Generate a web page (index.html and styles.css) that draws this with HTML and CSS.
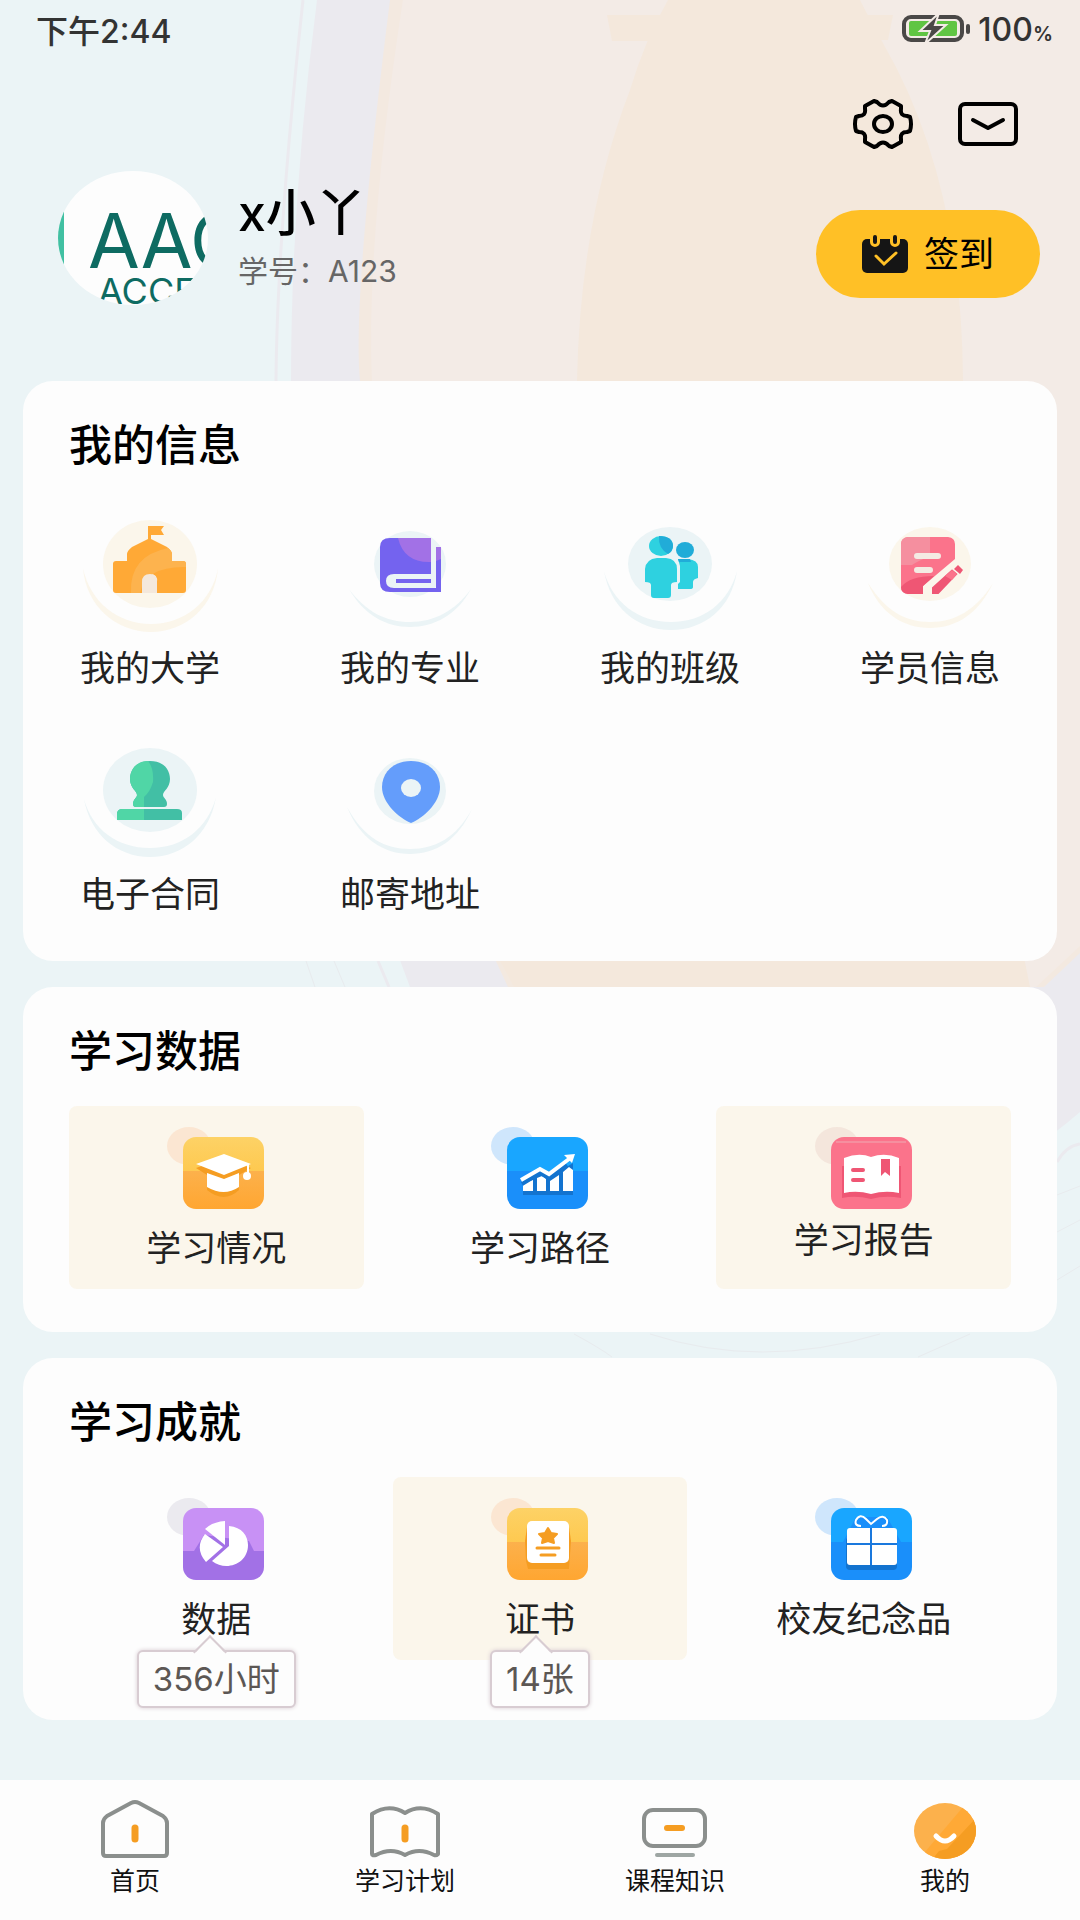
FILE: index.html
```
<!DOCTYPE html>
<html lang="zh-CN">

<head>
    <meta charset="UTF-8">
    <meta name="viewport" content="width=device-width, initial-scale=1.0">
    <title>我的</title>
    <link rel="stylesheet" href="styles.css">
</head>

<body>
    <svg class="page-bg" viewBox="0 0 1080 1920" preserveAspectRatio="none" aria-hidden="true">
        <path fill="#ebeaef" d="M317 0 Q291 200 291 381 Q300 700 410 987 L800 1240 Q980 1200 1080 1112 V0Z" />
        <path fill="#f3e9e0" d="M390 0 Q352 300 360 381 Q380 720 508 987 H1044 L1080 953 V0Z" />
        <path fill="#f3ebe6" d="M403 0 Q366 240 372 381 Q400 720 530 987 H1036 L1080 946 V0Z" />
        <path fill="#f4e8dc" d="M668 0 Q645 40 630 90 Q580 220 577 381 Q540 800 500 961 L514 987 H1030 Q970 700 963 381 Q962 180 884 45 Q870 20 860 0Z" />
        <path fill="#f4e8dc" d="M607 15 H665 V41 H612Z M860 15 H893 L888 40 H870Z" />
        <path fill="none" stroke="#ebeaef" stroke-width="3" d="M303 0 Q277 240 276 381 M378 961 L389 987 M1057 1162 Q1066 1146 1080 1144" />
        <path fill="none" stroke="#e8ebee" d="M306 961 L315 987 M334 961 L345 987 M574 1334 Q600 1348 612 1357 M650 1334 Q760 1370 880 1334 M918 1357 L970 1334 M1057 1195 L1080 1186 M1057 1232 L1080 1220 M1057 1280 L1080 1266" />
    </svg>

    <div class="status-bar">
        <span>下午2:44</span>
        <div class="battery">
            <svg width="70" height="32" viewBox="0 0 70 32">
                <rect x="4" y="4" width="58" height="23" rx="7" fill="#f3ebe6" stroke="#4a4847" stroke-width="4" />
                <rect x="9" y="8" width="48" height="15" rx="2" fill="#60c543" />
                <rect x="66" y="11" width="4" height="10" rx="2" fill="#4a4847" />
                <path fill="#4a4847" stroke="#f3ebe6" stroke-width="2" d="M39 0 L20 18 H30 L25 31 L46 12 H35Z" />
            </svg>
            <span>100<small>%</small></span>
        </div>
    </div>

    <header class="header">
        <div class="actions">
            <button type="button" class="icon-btn" aria-label="设置">
                <svg width="60" height="50" viewBox="0 0 60 50" fill="none" stroke="#000" stroke-width="4" stroke-linejoin="round">
                    <path d="M21 2 L24 3 Q30 10 36 3 L39 2 L48 7 V10 Q47 17 54 17 L57 18 Q59 25 57 32 L54 33 Q47 33 48 40 V43 L39 48 L36 47 Q30 40 24 47 L21 48 L12 43 V40 Q13 33 6 33 L3 32 Q1 25 3 18 L6 17 Q13 17 12 10 V7Z" />
                    <ellipse cx="30" cy="25" rx="9" ry="8" />
                </svg>
            </button>
            <button type="button" class="icon-btn" aria-label="消息">
                <svg width="62" height="50" viewBox="0 0 62 50" fill="none" stroke="#000" stroke-width="4" stroke-linecap="round" stroke-linejoin="round">
                    <rect x="3" y="5" width="56" height="40" rx="5" />
                    <path d="M16 21 L31 29 L46 21" />
                </svg>
            </button>
        </div>
        <div class="profile">
            <svg class="avatar" width="150" height="134" viewBox="0 0 150 134">
                <clipPath id="avatarClip">
                    <ellipse cx="75" cy="67" rx="75" ry="67" />
                </clipPath>
                <g clip-path="url(#avatarClip)">
                    <rect width="150" height="134" fill="#fdfdfd" />
                    <rect width="6" height="134" fill="#41c0a2" />
                    <text class="avatar-big" x="30" y="97">AAC</text>
                    <text class="avatar-small" x="40" y="133">ACCE</text>
                </g>
            </svg>
            <div class="profile-text">
                <h1>x小丫</h1>
                <p>学号：A123</p>
            </div>
            <button type="button" class="checkin-btn">
                <svg width="46" height="40" viewBox="0 0 46 40" aria-hidden="true">
                    <rect x="0" y="5" width="46" height="34" rx="5" fill="#151515" />
                    <path d="M13 0 V8 M33 0 V8" stroke="#ffc026" stroke-width="10" stroke-linecap="round" />
                    <path d="M13 3 V8 M33 3 V8" stroke="#151515" stroke-width="4" stroke-linecap="round" />
                    <path d="M14 22 L22 30 L34 19" fill="none" stroke="#ffc026" stroke-width="3" stroke-linecap="round" />
                </svg>
                签到
            </button>
        </div>
    </header>

    <main class="content">
        <section class="card">
            <h2>我的信息</h2>
            <div class="info-grid">
                <a href="#" class="info-item">
                    <svg width="140" height="116" viewBox="0 0 140 116">
                        <ellipse cx="70" cy="44" rx="47" ry="44" fill="#fbf6eb" />
                        <path fill="#fbf6eb" d="M3 48 C6 86 36 112 71 112 S135 86 138 48 C132 82 104 104 71 104 S10 82 3 48Z" />
                        <path fill="#ffa936" d="M68 6 H84 L81 10 L84 15 H71 V19 L87 27 Q92 31 92 34 V41 H103 Q106 41 106 44 V70 Q106 73 103 73 H77 V62 Q77 54 70 54 T62 62 V73 H36 Q33 73 33 70 V44 Q33 41 36 41 H47 V34 Q47 31 52 27 L68 19Z" />
                        <path fill="#fdb34e" d="M51 73 Q49 36 88 28 Q92 31 92 34 V41 H103 Q106 41 106 44 V47 Q66 46 60 73Z" />
                        <path fill="#f4e8dc" d="M62 73 V62 Q62 54 70 54 T77 62 V73Z" />
                    </svg>
                    <span>我的大学</span>
                </a>
                <a href="#" class="info-item">
                    <svg width="140" height="116" viewBox="0 0 140 116">
                        <ellipse cx="70" cy="44" rx="36" ry="33" fill="#ebf4f6" />
                        <path fill="#ebf4f6" d="M9 69 C24 95 46 107 70 107 S117 95 131 69 C115 91 94 102 70 102 S26 92 9 69Z" />
                        <path fill="#7463ef" d="M50 18 H91 V54 H54 Q46 54 46 61 T54 68 H96 V27 H101 V72 H50 Q40 72 40 63 V27 Q40 18 50 18Z" />
                        <path fill="#a271e6" d="M58 18 H91 V42 Q64 43 58 18Z M96 27 H101 V39 L96 41Z" />
                        <rect x="56" y="59" width="35" height="4" fill="#7463ef" />
                    </svg>
                    <span>我的专业</span>
                </a>
                <a href="#" class="info-item">
                    <svg width="140" height="116" viewBox="0 0 140 116">
                        <ellipse cx="70" cy="44" rx="42" ry="37" fill="#ebf4f6" />
                        <path fill="#ebf4f6" d="M4 51 C10 87 37 110 71 110 S132 87 137 51 C129 82 104 102 71 102 S12 82 4 51Z" />
                        <ellipse cx="61" cy="26" rx="12" ry="10" fill="#2ed1e0" />
                        <path fill="#21acd8" d="M59 16 Q73 16 73 26 Q73 31 68 34 Q58 28 59 16Z" />
                        <ellipse cx="85" cy="30" rx="9" ry="8" fill="#21acd8" />
                        <path fill="#2ed1e0" d="M57 38 H66 Q77 39 77 49 V62 Q71 62 71 65 V75 Q71 78 68 78 H54 Q51 78 51 75 V65 Q51 62 45 62 V49 Q46 39 57 38Z" />
                        <path fill="#2ed1e0" d="M78 39 H88 Q98 40 98 47 V58 Q93 59 93 62 V67 Q93 69 90 69 H78 V64 L80 62 V46Z" />
                        <path fill="#21acd8" d="M78 39 H90 L91 42 H79Z" />
                    </svg>
                    <span>我的班级</span>
                </a>
                <a href="#" class="info-item">
                    <svg width="140" height="116" viewBox="0 0 140 116">
                        <ellipse cx="70" cy="44" rx="41" ry="37" fill="#fbf6eb" />
                        <path fill="#fbf6eb" d="M8 63 C20 93 43 108 70 108 S119 93 133 63 C116 90 95 102 70 102 S26 91 8 63Z" />
                        <path fill="#fb738b" d="M48 17 H88 Q95 18 95 24 V39 L63 66 V74 H48 Q41 73 41 67 V24 Q41 18 48 17Z" />
                        <path fill="#f58f9f" d="M48 17 H70 V36 Q58 41 52 45 H41 V24 Q41 18 48 17Z" />
                        <path fill="#ef5674" d="M41 67 Q50 56 74 56 L63 66 V74 H48 Q41 73 41 67Z" />
                        <path stroke="#f4ebe3" stroke-width="6" stroke-linecap="round" d="M57 36 H78 M57 50 H70" />
                        <path fill="#ef5674" stroke="#fbf6eb" stroke-width="2" d="M71 67 L92 48 L99 54 L79 75 H71Z" />
                        <path fill="#fb738b" d="M85 56 L92 50 L97 54 L92 60Z" />
                        <path fill="#ef5674" d="M98 45 L103 50 L100 54 L94 49Z" />
                    </svg>
                    <span>学员信息</span>
                </a>
                <a href="#" class="info-item">
                    <svg width="140" height="116" viewBox="0 0 140 116">
                        <ellipse cx="70" cy="44" rx="47" ry="42" fill="#ebf4f6" />
                        <path fill="#ebf4f6" d="M4 53 C10 88 37 111 70 111 S130 88 136 51 C128 82 103 102 70 102 S12 83 4 53Z" />
                        <path fill="#42bfa5" d="M70 15 C84 15 90 24 90 33 C90 42 83 45 83 49 C83 52 87 53 87 58 Q87 61 84 61 H56 Q53 61 53 58 C53 53 57 52 57 49 C57 45 50 42 50 33 C50 24 56 15 70 15Z" />
                        <path fill="#50d6a6" d="M68 15 Q74 22 73 36 Q70 46 64 51 V61 H56 Q53 61 53 58 C53 53 57 52 57 49 C57 45 50 42 50 33 C50 24 56 15 68 15Z" />
                        <path fill="#42bfa5" d="M37 74 V67 Q38 63 42 63 H97 Q102 63 102 67 V74Z" />
                        <path fill="#50d6a6" d="M37 74 V67 Q38 63 42 63 H64 V74Z" />
                    </svg>
                    <span>电子合同</span>
                </a>
                <a href="#" class="info-item">
                    <svg width="140" height="116" viewBox="0 0 140 116">
                        <ellipse cx="70" cy="45" rx="36" ry="33" fill="#ebf4f6" />
                        <path fill="#ebf4f6" d="M7 61 C20 93 44 108 70 108 S118 94 132 63 C116 92 95 103 70 103 S24 92 7 61Z" />
                        <path fill="#649dfb" d="M71 15 C89 15 100 27 100 41 C100 57 83 72 71 77 C59 72 42 57 42 41 C42 27 53 15 71 15Z" />
                        <ellipse cx="71" cy="42" rx="10" ry="9" fill="#ebf4f6" />
                    </svg>
                    <span>邮寄地址</span>
                </a>
            </div>
        </section>

        <section class="card">
            <h2>学习数据</h2>
            <div class="tile-grid">
                <a href="#" class="tile tile-cream">
                    <svg width="98" height="83" viewBox="0 0 98 83">
                        <defs>
                            <linearGradient id="orange" x1="0" y1="0" x2="0" y2="1">
                                <stop offset="0" stop-color="#fdd266" />
                                <stop offset=".47" stop-color="#fec950" />
                                <stop offset=".47" stop-color="#fcb14c" />
                                <stop offset="1" stop-color="#ffa631" />
                            </linearGradient>
                            <linearGradient id="blue" x1="0" y1="0" x2="0" y2="1">
                                <stop offset=".47" stop-color="#19a6ff" />
                                <stop offset=".47" stop-color="#1a8ffa" />
                            </linearGradient>
                            <linearGradient id="purple" x1="0" y1="0" x2="0" y2="1">
                                <stop offset=".6" stop-color="#c891f5" />
                                <stop offset=".6" stop-color="#a271e6" />
                            </linearGradient>
                        </defs>
                        <ellipse cx="22" cy="20" rx="22" ry="19" fill="#fbe6d2" />
                        <rect x="16" y="11" width="81" height="72" rx="13" fill="url(#orange)" />
                        <path fill="#f59d22" d="M29 42 L57 32 L84 42 L72 49 V64 Q57 78 40 64 V49Z" />
                        <path fill="#fff" d="M29 38 L57 28 L84 38 L57 49Z M40 47 L57 53 L72 47 V61 Q57 71 40 61Z" />
                        <path stroke="#fff" stroke-width="2" d="M81 38 V50" />
                        <circle cx="80" cy="50" r="4" fill="#fff" />
                    </svg>
                    <span>学习情况</span>
                </a>
                <a href="#" class="tile">
                    <svg width="98" height="83" viewBox="0 0 98 83">
                        <ellipse cx="22" cy="20" rx="22" ry="19" fill="#cfe6fc" />
                        <rect x="16" y="11" width="81" height="72" rx="13" fill="url(#blue)" />
                        <path fill="#1373cf" d="M32 59 L50 46 L58 52 L82 37 V69 H32Z" />
                        <path fill="#fff" d="M32 57 L42 54 V65 H32Z M46 52 L51 50 L55 53 V65 H46Z M59 55 L68 49 V65 H59Z M72 46 L78 41 L82 44 V65 H72Z" />
                        <path fill="none" stroke="#1373cf" stroke-width="4" d="M31 58 L49 47 L58 52 L76 39" />
                        <path fill="none" stroke="#fff" stroke-width="4" d="M30 54 L49 43 L58 48 L78 33" />
                        <path fill="#fff" d="M73 29 L84 28 L81 37Z" />
                    </svg>
                    <span>学习路径</span>
                </a>
                <a href="#" class="tile tile-cream tile-tight">
                    <svg width="98" height="83" viewBox="0 0 98 83">
                        <ellipse cx="22" cy="20" rx="22" ry="19" fill="#f4e6dc" />
                        <rect x="16" y="11" width="81" height="72" rx="13" fill="#fb738b" />
                        <path stroke="#f58f9f" stroke-width="2" d="M21 16 H91" />
                        <path fill="#ef5674" d="M27 40 H86 V72 Q70 69 56 73 Q41 69 27 72Z" />
                        <path fill="#fff" d="M29 32 Q44 26 56 31 Q70 26 84 32 V67 Q70 64 56 68 Q42 64 29 67Z" />
                        <path stroke="#ef5674" stroke-width="4" stroke-linecap="round" d="M38 44 H48 M38 54 H48" />
                        <path fill="#ef5674" d="M66 33 H75 V50 L70 46 L66 50Z" />
                    </svg>
                    <span>学习报告</span>
                </a>
            </div>
        </section>

        <section class="card card-last">
            <h2>学习成就</h2>
            <div class="tile-grid">
                <a href="#" class="tile">
                    <svg width="98" height="83" viewBox="0 0 98 83">
                        <ellipse cx="22" cy="20" rx="22" ry="19" fill="#ebeaef" />
                        <rect x="16" y="11" width="81" height="72" rx="13" fill="url(#purple)" />
                        <path fill="#a271e6" d="M27 54 L37 38 L82 44 L87 54Z" />
                        <path fill="#fff" d="M58 48 V24 Q45 25 38 32Z M56 50 L38 37 Q27 51 39 65Z M62 49 V29 C75 30 81 39 81 48 C81 67 59 75 45 64Z" />
                    </svg>
                    <span>数据</span>
                    <div class="callout">356小时</div>
                </a>
                <a href="#" class="tile tile-cream">
                    <svg width="98" height="83" viewBox="0 0 98 83">
                        <ellipse cx="22" cy="20" rx="22" ry="19" fill="#fbe6d2" />
                        <rect x="16" y="11" width="81" height="72" rx="13" fill="url(#orange)" />
                        <path fill="#f59d22" d="M34 44 L36 30 H78 L80 44 L78 72 H37 L35 64Z" />
                        <rect x="36" y="24" width="42" height="42" rx="5" fill="#fff" />
                        <path fill="#f59d22" stroke="#f59d22" stroke-width="2" stroke-linejoin="round" d="M57 31 L60 36 L66 37 L62 41 L63 46 L57 44 L51 46 L52 41 L48 37 L54 36Z" />
                        <path stroke="#f59d22" stroke-width="3" stroke-linecap="round" d="M46 51 H68 M50 58 H64" />
                    </svg>
                    <span>证书</span>
                    <div class="callout">14张</div>
                </a>
                <a href="#" class="tile">
                    <svg width="98" height="83" viewBox="0 0 98 83">
                        <ellipse cx="22" cy="20" rx="22" ry="19" fill="#cfe6fc" />
                        <rect x="16" y="11" width="81" height="72" rx="13" fill="url(#blue)" />
                        <path fill="#1a8ffa" d="M28 45 L41 20 H72 L86 45Z" />
                        <rect x="31" y="40" width="51" height="33" rx="4" fill="#1373cf" />
                        <rect x="32" y="31" width="50" height="37" rx="3" fill="#fff" />
                        <path stroke="#1a78dd" stroke-width="2" d="M32 47 H82 M56 31 V68" />
                        <path fill="none" stroke="#fff" stroke-width="2" d="M46 29 Q39 29 41 23 Q45 16 51 22 L56 27 L62 22 Q68 17 72 23 Q73 29 67 29" />
                    </svg>
                    <span>校友纪念品</span>
                </a>
            </div>
        </section>
    </main>

    <nav class="tab-bar">
        <a href="#" class="tab">
            <svg width="72" height="60" viewBox="0 0 72 60" fill="none" stroke-linecap="round" stroke-linejoin="round">
                <path stroke="#8b8f8d" stroke-width="4" d="M32 4 Q36 2 40 4 L64 17 Q68 20 68 24 V54 Q68 57 65 57 H7 Q4 57 4 54 V24 Q4 20 8 17Z" />
                <path stroke="#f59d22" stroke-width="7" d="M36 29 V40" />
            </svg>
            <span>首页</span>
        </a>
        <a href="#" class="tab">
            <svg width="72" height="60" viewBox="0 0 72 60" fill="none" stroke-linecap="round" stroke-linejoin="round">
                <path stroke="#8b8f8d" stroke-width="4" d="M3 15 Q20 4 36 14 Q52 4 69 15 V55 Q67 57 65 56 Q50 48 36 56 Q22 48 7 56 Q3 57 3 55Z" />
                <path stroke="#f59d22" stroke-width="7" d="M36 29 V40" />
            </svg>
            <span>学习计划</span>
        </a>
        <a href="#" class="tab">
            <svg width="72" height="60" viewBox="0 0 72 60" fill="none" stroke-linecap="round">
                <rect x="5" y="11" width="61" height="36" rx="9" stroke="#8b8f8d" stroke-width="4" />
                <path stroke="#9ea6a3" stroke-width="4" d="M18 56 H54" />
                <path stroke="#f59d22" stroke-width="6" d="M28 29 H43" />
            </svg>
            <span>课程知识</span>
        </a>
        <a href="#" class="tab">
            <svg width="72" height="60" viewBox="0 0 72 60">
                <clipPath id="faceClip">
                    <ellipse cx="36" cy="32" rx="31" ry="28" />
                </clipPath>
                <g clip-path="url(#faceClip)">
                    <rect width="72" height="62" fill="#fcb14c" />
                    <path fill="#ffa936" d="M10 60 L54 8 L72 20 V62Z" />
                    <path fill="#f59d22" d="M22 62 L30 52 L38 50 L66 20 L72 62Z" />
                </g>
                <path d="M27 37 Q36 47 45 37" fill="none" stroke="#fff" stroke-width="5" stroke-linecap="round" />
            </svg>
            <span>我的</span>
        </a>
    </nav>
</body>

</html>
```
FILE: styles.css
```
* {
    box-sizing: border-box;
    margin: 0;
    padding: 0;
}

body {
    position: relative;
    display: flex;
    flex-direction: column;
    min-height: 100vh;
    font-family: Inter, "Noto Sans CJK SC", sans-serif;
    background-color: #ebf4f6;
    color: #222;
}

a {
    color: inherit;
    text-decoration: none;
}

button {
    border: none;
    background: none;
    font-family: inherit;
    cursor: pointer;
}

svg {
    display: block;
    flex-shrink: 0;
}

/* soft blobs behind everything */
.page-bg {
    position: absolute;
    top: 0;
    left: 0;
    width: 100%;
    height: 100%;
    z-index: -1;
}

.status-bar {
    display: flex;
    justify-content: space-between;
    align-items: center;
    height: 58px;
    padding: 0 27px 0 36px;
    font-size: 32px;
    font-weight: 500;
    color: #333;
}

.status-bar small {
    font-size: 20px;
    font-weight: 600;
}

.battery {
    display: flex;
    align-items: center;
    gap: 8px;
}

.header {
    padding: 41px 40px 76px 58px;
}

.actions {
    display: flex;
    justify-content: flex-end;
    gap: 44px;
    padding-right: 21px;
    margin-bottom: 22px;
}

.profile {
    display: flex;
    align-items: center;
    gap: 30px;
}

.avatar text {
    font-family: Inter, "Liberation Sans", sans-serif;
    fill: #0e6b62;
}

.avatar .avatar-big {
    font-size: 75px;
}

.avatar .avatar-small {
    font-size: 36px;
}

.profile-text h1 {
    font-size: 50px;
    font-weight: 500;
    line-height: 56px;
    color: #000;
}

.profile-text p {
    margin-top: 10px;
    font-size: 30px;
    line-height: 40px;
    color: #666;
}

.checkin-btn {
    display: flex;
    align-items: center;
    align-self: flex-end;
    gap: 16px;
    margin: 0 0 7px auto;
    padding: 20px 46px;
    border-radius: 44px;
    background-color: #ffc026;
    font-size: 35px;
    line-height: 48px;
    color: #000;
}

.content {
    display: flex;
    flex-direction: column;
    flex: 1;
    gap: 26px;
    padding: 0 23px 59px;
}

.card {
    padding: 34px 0 43px;
    border-radius: 30px;
    background-color: #fdfdfd;
}

.card-last {
    padding-bottom: 60px;
}

.card h2 {
    padding: 0 46px;
    font-size: 43px;
    font-weight: 500;
    line-height: 60px;
    color: #000;
}

.info-grid {
    display: grid;
    grid-template-columns: repeat(4, 1fr);
    row-gap: 58px;
    margin: 45px -3px 4px;
}

.info-item {
    display: flex;
    flex-direction: column;
    align-items: center;
    gap: 12px;
    font-size: 35px;
    line-height: 40px;
}

.tile-grid {
    display: grid;
    grid-template-columns: repeat(3, 1fr);
    gap: 29px;
    margin-top: 25px;
    padding: 0 46px;
}

.tile {
    position: relative;
    display: flex;
    flex-direction: column;
    align-items: center;
    gap: 19px;
    padding: 20px 0 21px;
    border-radius: 8px;
    font-size: 35px;
    line-height: 40px;
}

.tile-cream {
    background-color: #fbf6eb;
}

.tile-tight {
    gap: 11px;
}

/* value bubble hanging under a tile */
.callout {
    position: absolute;
    top: 173px;
    padding: 8px 14px;
    border: 2px solid #d8ccd2;
    border-radius: 6px;
    background-color: #fdfdfd;
    box-shadow: 0 0 4px #d8ccd2;
    font-size: 33px;
    line-height: 38px;
    white-space: nowrap;
    color: #5c5754;
}

.callout::before {
    content: "";
    position: absolute;
    top: -12px;
    left: 45%;
    width: 22px;
    height: 22px;
    margin-left: -11px;
    border: 2px solid #d8ccd2;
    border-right: none;
    border-bottom: none;
    background: linear-gradient(135deg, #fdfdfd 55%, transparent 55%);
    transform: rotate(45deg);
}

.tab-bar {
    display: grid;
    grid-template-columns: repeat(4, 1fr);
    padding: 19px 0 22px;
    background-color: #fdfdfd;
}

.tab {
    display: flex;
    flex-direction: column;
    align-items: center;
    gap: 5px;
    font-size: 25px;
    line-height: 34px;
    color: #111;
}
```
